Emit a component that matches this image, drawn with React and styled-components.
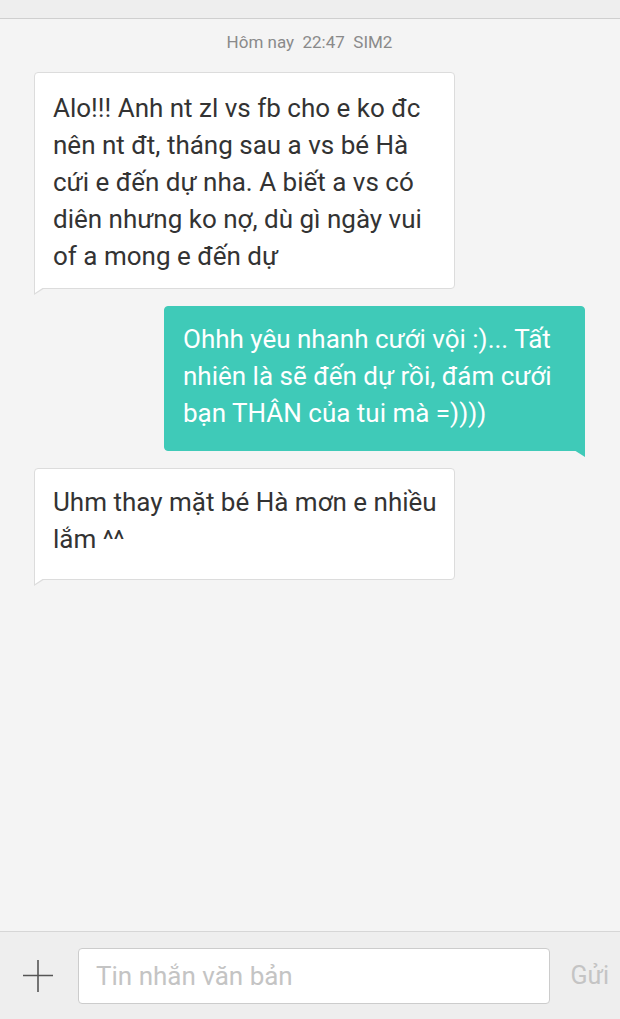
import styled, { createGlobalStyle } from 'styled-components';

const GlobalStyle = createGlobalStyle`
  html, body {
    margin: 0;
    padding: 0;
    background: #f4f4f4;
  }
  body {
    font-family: Roboto, "Noto Sans", "Liberation Sans", sans-serif;
  }
`;

const Screen = styled.div`
  display: flex;
  flex-direction: column;
  width: 620px;
  height: 1019px;
  background: #f4f4f4;
  overflow: hidden;
`;

const TopBar = styled.div`
  height: 18px;
  flex-shrink: 0;
  background: #eeeeee;
  border-bottom: 1px solid #cfcfcf;
`;

const Thread = styled.div`
  flex: 1;
  display: flex;
  flex-direction: column;
  padding: 0 35px 0 34px;
`;

const Stamp = styled.div`
  margin: 12px 0 19px;
  text-align: center;
  font-size: 17px;
  line-height: 22px;
  color: #8a8a8a;
  white-space: pre;
`;

const Bubble = styled.div`
  position: relative;
  box-sizing: border-box;
  width: 421px;
  align-self: ${p => (p.mine ? 'flex-end' : 'flex-start')};
  margin-bottom: 17px;
  padding: ${p => p.pad || '14px 12px 15px 18px'};
  font-size: 26px;
  line-height: 37px;
  color: ${p => (p.mine ? '#ffffff' : '#333333')};
  background: ${p => (p.mine ? '#3fcab8' : '#ffffff')};
  border: 1px solid ${p => (p.mine ? '#3fcab8' : '#dcdcdc')};
  border-radius: 4px;
  ${p => (p.mine ? 'border-bottom-right-radius: 0;' : 'border-bottom-left-radius: 0;')}

  &::after {
    content: '';
    position: absolute;
    bottom: -7px;
    ${p => (p.mine ? 'right: -1px;' : 'left: -1px;')}
    width: 11px;
    height: 7px;
    background: ${p => (p.mine ? '#3fcab8' : '#dcdcdc')};
    clip-path: ${p => (p.mine ? 'polygon(0 0, 100% 0, 100% 100%)' : 'polygon(0 0, 100% 0, 0 100%)')};
  }

  &::before {
    content: '';
    display: ${p => (p.mine ? 'none' : 'block')};
    position: absolute;
    bottom: -5px;
    left: 0;
    width: 9px;
    height: 6px;
    background: #ffffff;
    clip-path: polygon(0 0, 100% 0, 0 100%);
    z-index: 1;
  }
`;

const Composer = styled.div`
  flex-shrink: 0;
  height: 88px;
  display: flex;
  align-items: center;
  padding: 0 11px 0 23px;
  background: #eeeeee;
  border-top: 1px solid #d6d6d6;
  box-sizing: border-box;
`;

const PlusButton = styled.div`
  width: 30px;
  height: 32px;
  margin-right: 25px;
  display: flex;
  align-items: center;
  justify-content: center;
  color: #555555;
`;

const Input = styled.div`
  flex: 1;
  height: 56px;
  box-sizing: border-box;
  display: flex;
  align-items: center;
  padding: 0 17px;
  background: #ffffff;
  border: 1px solid #cccccc;
  border-radius: 4px;
  font-size: 26px;
  color: #c4c4c4;
`;

const Send = styled.div`
  width: 59px;
  text-align: right;
  font-size: 25px;
  color: #c4c4c4;
`;

export default function App() {
  return (
    <Screen>
      <GlobalStyle />
      <TopBar />
      <Thread>
        <Stamp>Hôm nay  22:47  SIM2</Stamp>
        <Bubble pad="17px 12px 13px 18px">
          Alo!!! Anh nt zl vs fb cho e ko đc nên nt đt, tháng sau a vs bé Hà cứi e đến dự nha. A biết a vs có diên nhưng ko nợ, dù gì ngày vui of a mong e đến dự
        </Bubble>
        <Bubble mine pad="14px 12px 18px 18px">
          Ohhh yêu nhanh cưới vội :)... Tất nhiên là sẽ đến dự rồi, đám cưới bạn THÂN của tui mà =))))
        </Bubble>
        <Bubble pad="15px 12px 21px 18px">Uhm thay mặt bé Hà mơn e nhiều lắm ^^</Bubble>
      </Thread>
      <Composer>
        <PlusButton>
          <svg width="30" height="32" viewBox="0 0 30 32" fill="none" stroke="currentColor" strokeWidth="1.6">
            <path d="M0 15.5H30M15 0V32" />
          </svg>
        </PlusButton>
        <Input>Tin nhắn văn bản</Input>
        <Send>Gửi</Send>
      </Composer>
    </Screen>
  );
}
